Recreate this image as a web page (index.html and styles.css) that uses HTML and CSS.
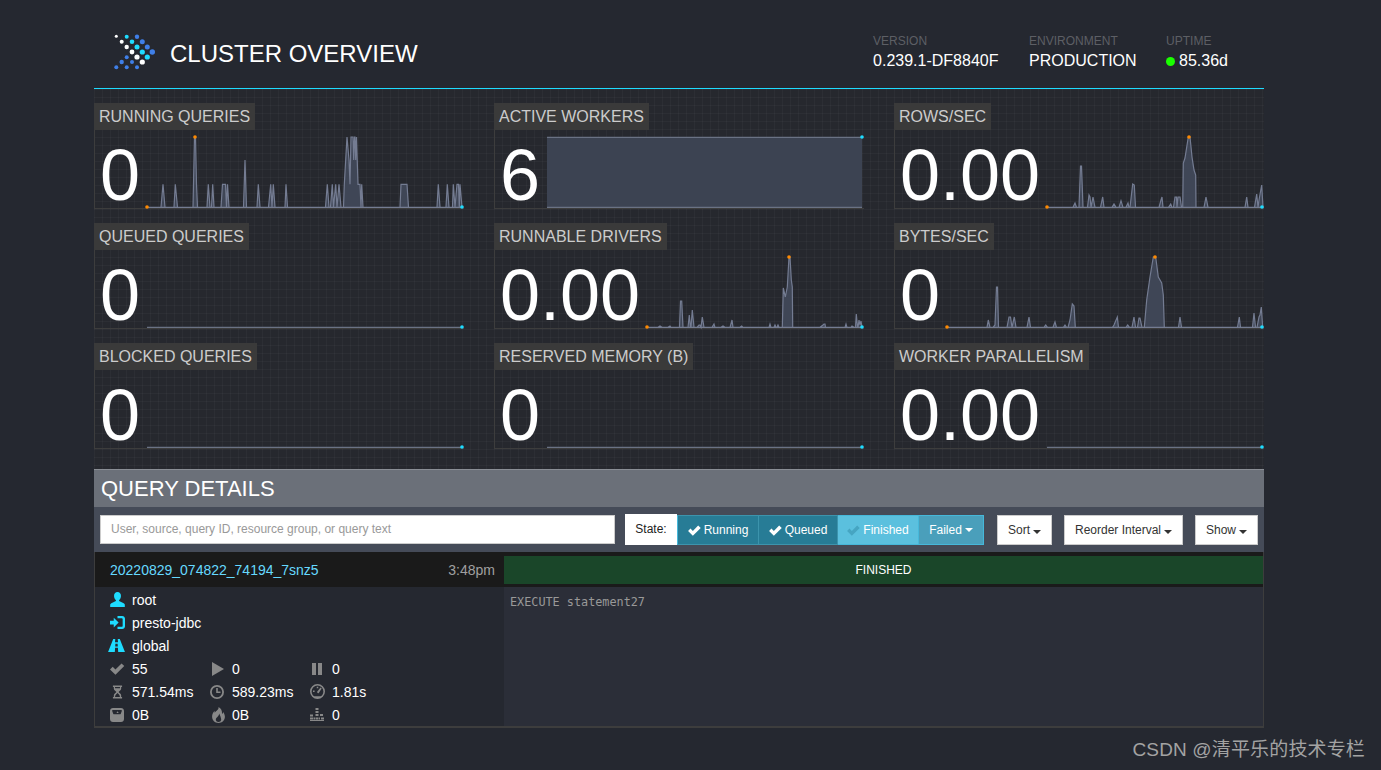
FILE: index.html
```html
<!DOCTYPE html>
<html lang="en">
<head>
<meta charset="utf-8">
<title>Cluster Overview</title>
<link rel="stylesheet" href="styles.css">
</head>
<body>
<div class="container">
  <header class="header">
    <div class="brand">
      <svg class="logo" viewBox="110 30 50 44" width="50" height="44">
        <g class="d-w"><circle cx="116.3" cy="36.3" r="1.5"/><circle cx="121.7" cy="41.7" r="2"/><circle cx="126.7" cy="47" r="2.2"/><circle cx="132" cy="52" r="2.4"/><circle cx="137" cy="57" r="2.6"/><circle cx="142.3" cy="62" r="2.6"/></g>
        <g class="d-c"><circle cx="126.7" cy="36.7" r="2"/><circle cx="132" cy="41.7" r="2.3"/><circle cx="137" cy="47" r="2.5"/><circle cx="142.3" cy="52" r="2.6"/><circle cx="147.3" cy="57" r="2.6"/></g>
        <g class="d-b"><circle cx="137" cy="36.7" r="2.2"/><circle cx="142.3" cy="41.7" r="2.5"/><circle cx="147.3" cy="47" r="2.5"/><circle cx="152.3" cy="52" r="2.7"/><circle cx="126.7" cy="57.3" r="2"/><circle cx="121.7" cy="62" r="2.2"/><circle cx="132" cy="62" r="2"/><circle cx="116.3" cy="67.3" r="2"/><circle cx="126.7" cy="67.3" r="2"/><circle cx="137" cy="67.3" r="2"/></g>
      </svg>
      <h1 class="title">CLUSTER OVERVIEW</h1>
    </div>
    <div class="meta">
      <div class="meta-item meta-version"><span class="meta-label">VERSION</span><span class="meta-value">0.239.1-DF8840F</span></div>
      <div class="meta-item meta-env"><span class="meta-label">ENVIRONMENT</span><span class="meta-value">PRODUCTION</span></div>
      <div class="meta-item"><span class="meta-label">UPTIME</span><span class="meta-value"><i class="status-dot"></i>85.36d</span></div>
    </div>
  </header>

  <section class="stats">
    <div class="stat">
      <div class="stat-label">RUNNING QUERIES</div>
      <div class="stat-body">
        <div class="stat-value">0</div>
        <svg class="spark" viewBox="145 130 320 80" width="320" height="80">
          <path class="area" d="M147 207.3H160L161 207 163 184.3 165 207.3H174L175.3 184.3 177.5 207.3H193L193.5 184.3 194.5 137H195.500L196.500 184.300 197.500 207.300H207L208.300 184.300 210 207.300H211.500L212.700 184.300 214 207.300H221L222.500 184.300H225.500L226.500 207.300 227.500 184.300 229 207.300H243.500L245 160 246.500 207.300H257L258.300 184.300 260 207.300H268.500L270.700 184.300 272 207.300 273.300 184.300 275 207.300H285L286 184.300 287.500 207.300H325.500L327.300 184.300 329 207.300H330.500L332.300 184.300 333.500 207.300 335.700 184.300 337 207.300 339 184.300 341 207.300H343.500L344.300 184.300 347 137 349 160 350 184.300 351 137H353L353.700 160 354.500 137H355L355.700 160 356.500 137 358 184.300H360L361 207.300 361.700 184.300 363 207.300H400L401 184.300H407L408.500 207.300H437L438.300 184.300 440 207.300H446L447.300 184.300 449 207.300H452.500L453.300 184.300 455 207.300 457 184.300H458.500L459.300 207.300 460 184.300 462 207.300Z"/>
          <circle class="dot-min" cx="147" cy="207" r="1.8"/><circle class="dot-min" cx="195" cy="137" r="1.8"/><circle class="dot-end" cx="462" cy="207" r="1.8"/>
        </svg>
      </div>
    </div>
    <div class="stat">
      <div class="stat-label">ACTIVE WORKERS</div>
      <div class="stat-body">
        <div class="stat-value">6</div>
        <svg class="spark" viewBox="545 130 320 80" width="320" height="80">
          <path class="block" d="M547 137.300H862V207.300H547Z"/>
          <path class="flat" d="M547 137.300H862M547 207.300H862"/>
          <circle class="dot-end" cx="862" cy="137" r="1.8"/>
        </svg>
      </div>
    </div>
    <div class="stat">
      <div class="stat-label">ROWS/SEC</div>
      <div class="stat-body">
        <div class="stat-value">0.00</div>
        <svg class="spark spark-short" viewBox="1045 130 220 80" width="220" height="80">
          <path class="area" d="M1047 207.300H1073L1075 203 1076.500 207.300H1079L1080.500 166H1081.500L1083 207.300H1087.500L1089 195 1090 197 1091 207.300 1093 197 1095 207.300H1100.500L1102.700 197 1104 207.300H1112L1114 204 1116 207.300H1119L1121 200.700 1123 207.300H1126L1128 203 1129 207.300H1130L1132.700 184 1134.300 185 1135.500 207.300H1159L1161 200 1162 197 1163 207.300H1168.500L1170.700 204 1172 207.300H1173.500L1175 197 1176.500 197 1177 207.300 1178 197H1180L1181.500 207.300H1182.700L1183.300 163 1185 158 1188.300 137H1190L1192 157 1194 170 1195.700 175 1196 207.300H1204L1206 197 1208 207.300H1245L1246.700 197 1248 207.300H1254.500L1256.700 194 1258 207.300 1259 200 1261.700 185 1263 207.300Z"/>
          <circle class="dot-min" cx="1047" cy="207" r="1.8"/><circle class="dot-min" cx="1189" cy="137" r="1.8"/><circle class="dot-end" cx="1262" cy="207" r="1.8"/>
        </svg>
      </div>
    </div>

    <div class="stat">
      <div class="stat-label">QUEUED QUERIES</div>
      <div class="stat-body">
        <div class="stat-value">0</div>
        <svg class="spark" viewBox="145 250 320 80" width="320" height="80">
          <path class="flat" d="M147 327.300H462"/><circle class="dot-end" cx="462" cy="327" r="1.8"/>
        </svg>
      </div>
    </div>
    <div class="stat">
      <div class="stat-label">RUNNABLE DRIVERS</div>
      <div class="stat-body">
        <div class="stat-value">0.00</div>
        <svg class="spark spark-mid" viewBox="645 250 220 80" width="220" height="80">
          <path class="area" d="M647 327.300H658L660 326 662 327.300H668L670 326 671 327.300H679.500L680.500 301H681.700L683 327.300H688L689.300 315 690.500 327.300H691L692.300 310 694 327.300H697L699 325 700 325 701 327.300 702.300 317 704 327.300H712L714 324 715 327.300H721L723 326 725 327.300H730L732 320 733 327.300H740L741.700 326 743 327.300H769L770 324 771 327.300H774L775 325 776 327.300H777L778 325 779 327.300H782.300L783.300 288 785.300 297 787.300 287 789 257H790L791.300 280 792.300 287 792.700 327.300H820L823 325 824 324H825L825.500 327.300H845L846 324 847 327.300H851L852 326 854 327.300H855.500L856.300 314 857.500 327.300H858L859 320 860 325 861 321 862 327.300Z"/>
          <circle class="dot-min" cx="647" cy="327" r="1.8"/><circle class="dot-min" cx="789" cy="257" r="1.8"/><circle class="dot-end" cx="862" cy="327" r="1.8"/>
        </svg>
      </div>
    </div>
    <div class="stat">
      <div class="stat-label">BYTES/SEC</div>
      <div class="stat-body">
        <div class="stat-value">0</div>
        <svg class="spark" viewBox="945 250 320 80" width="320" height="80">
          <path class="area" d="M947 327.300H987L988.300 320 990 327.300H993L995 325 996.500 287H997.500L998.500 327.300H1007L1009 317H1010.500L1012 327.300 1014.300 317 1016 327.300H1027L1029 317 1030.500 327.300H1044L1045.700 325 1047.500 327.300H1053L1055 322 1056.500 327.300H1063.500L1065 325 1066.500 327.300H1068L1070 320 1072.300 304 1074 306 1075.300 327.300H1112.500L1114 325 1117.300 317 1118.500 327.300H1126L1127.700 325 1129.500 327.300H1132L1134 317 1135.500 327.300H1137.500L1139 318H1140L1142 327.300H1144.300L1146.700 300 1150 277 1153.300 257H1155.700L1158.300 277 1161.700 283 1163.300 295 1164.300 327.300H1178.500L1180 317 1181.500 327.300H1237.500L1239.300 317 1240.500 327.300H1252.500L1254 313 1255.500 327.300H1257L1259 317 1260 315 1261.300 307 1262.700 327.300Z"/>
          <circle class="dot-min" cx="947" cy="327" r="1.8"/><circle class="dot-min" cx="1155" cy="257" r="1.8"/><circle class="dot-end" cx="1262" cy="327" r="1.8"/>
        </svg>
      </div>
    </div>

    <div class="stat">
      <div class="stat-label">BLOCKED QUERIES</div>
      <div class="stat-body">
        <div class="stat-value">0</div>
        <svg class="spark" viewBox="145 370 320 80" width="320" height="80">
          <path class="flat" d="M147 447.300H462"/><circle class="dot-end" cx="462" cy="447" r="1.8"/>
        </svg>
      </div>
    </div>
    <div class="stat">
      <div class="stat-label">RESERVED MEMORY (B)</div>
      <div class="stat-body">
        <div class="stat-value">0</div>
        <svg class="spark" viewBox="545 370 320 80" width="320" height="80">
          <path class="flat" d="M547 447.300H862"/><circle class="dot-end" cx="862" cy="447" r="1.8"/>
        </svg>
      </div>
    </div>
    <div class="stat">
      <div class="stat-label">WORKER PARALLELISM</div>
      <div class="stat-body">
        <div class="stat-value">0.00</div>
        <svg class="spark spark-short" viewBox="1045 370 220 80" width="220" height="80">
          <path class="flat" d="M1047 447.300H1262"/><circle class="dot-end" cx="1262" cy="447" r="1.8"/>
        </svg>
      </div>
    </div>
  </section>

  <section class="details">
    <h2 class="details-title">QUERY DETAILS</h2>
    <div class="toolbar">
      <input class="search" type="text" placeholder="User, source, query ID, resource group, or query text">
      <div class="state-group">
        <span class="state-label">State:</span>
        <button class="seg seg-on seg-running"><svg class="tick" viewBox="0 0 14 12" width="13" height="11"><path d="M0 6.500 2.600 3.900 5.200 6.500 11 .6 13.800 3.200 5.200 11.800Z"/></svg>Running</button>
        <button class="seg seg-on seg-queued"><svg class="tick" viewBox="0 0 14 12" width="13" height="11"><path d="M0 6.500 2.600 3.900 5.200 6.500 11 .6 13.800 3.200 5.200 11.800Z"/></svg>Queued</button>
        <button class="seg seg-off"><svg class="tick tick-dim" viewBox="0 0 14 12" width="13" height="11"><path d="M0 6.500 2.600 3.900 5.200 6.500 11 .6 13.800 3.200 5.200 11.800Z"/></svg>Finished</button>
        <button class="seg seg-failed">Failed<i class="caret"></i></button>
      </div>
      <button class="drop drop-sort">Sort<i class="caret caret-dark"></i></button>
      <button class="drop drop-reorder">Reorder Interval<i class="caret caret-dark"></i></button>
      <button class="drop drop-show">Show<i class="caret caret-dark"></i></button>
    </div>

    <div class="query">
      <div class="query-left">
        <div class="query-head"><a class="query-id">20220829_074822_74194_7snz5</a><span class="query-time">3:48pm</span></div>
        <div class="info">
          <div class="info-row"><span class="ico"><svg viewBox="0 0 16 16" width="15" height="15"><path class="ic-c" d="M8 0C5.600 0 4.300 1.800 4.300 4.200c0 2 1 3.600 2 4.300v1.200L1.400 12c-.8.4-1.200 1-1.200 1.700V16h15.600v-2.300c0-.7-.4-1.300-1.200-1.700L9.700 9.700V8.500c1-.7 2-2.300 2-4.300C11.700 1.800 10.400 0 8 0Z"/></svg></span>root</div>
          <div class="info-row"><span class="ico"><svg viewBox="0 0 16 16" width="15" height="15"><path class="ic-c" d="M0 6H4V2.800L9.200 8 4 13.200V10H0ZM8 1H13C14.700 1 16 2.300 16 4V12C16 13.700 14.700 15 13 15H8V12.500H12.500C13.200 12.500 13.500 12.200 13.500 11.500V4.500C13.500 3.800 13.200 3.500 12.500 3.500H8Z"/></svg></span>presto-jdbc</div>
          <div class="info-row"><span class="ico ico-road"><svg viewBox="0 0 18 16" width="17" height="15"><path class="ic-c" d="M5.500 1H7.700L7.400 4.500H10.600L10.300 1H12.500L18 15H10.800L10.500 10.500H7.500L7.200 15H0ZM7.800 6.200 7.600 9H10.400L10.200 6.200Z"/></svg></span>global</div>
          <div class="stats-grid">
            <div class="cell"><span class="ico"><svg viewBox="0 0 16 12" width="15" height="12"><path class="ic-g" d="M0 6.500 2.900 3.700 5.800 6.600 12.300 0 15.200 2.900 5.800 12Z"/></svg></span>55</div>
            <div class="cell"><span class="ico"><svg class="ic-shift" viewBox="0 0 12 14" width="12" height="14"><path class="ic-g" d="M0 0 12 7 0 14Z"/></svg></span>0</div>
            <div class="cell"><span class="ico"><svg class="ic-shift" viewBox="0 0 10 12" width="10" height="12"><path class="ic-g" d="M0 0H4V12H0ZM6 0H10V12H6Z"/></svg></span>0</div>

            <div class="cell"><span class="ico"><svg class="ic-shift" viewBox="0 0 12 14" width="11" height="14"><path class="ic-g" d="M1 0H11V1.500H10V3.500C10 5 8 6 7.200 7 8 8 10 9 10 10.500V12.500H11V14H1V12.500H2V10.500C2 9 4 8 4.800 7 4 6 2 5 2 3.500V1.500H1ZM3.300 1.500V3H8.700V1.500ZM6 8.200C5 9.200 3.500 10 3.300 12.500H8.700C8.500 10 7 9.200 6 8.200Z"/></svg></span>571.54ms</div>
            <div class="cell"><span class="ico"><svg viewBox="0 0 14 14" width="14" height="14"><path class="ic-g" fill-rule="evenodd" d="M7 0A7 7 0 1 1 7 14 7 7 0 0 1 7 0ZM7 1.800A5.200 5.200 0 1 0 7 12.200 5.200 5.200 0 0 0 7 1.800ZM6.200 3H7.800V6.500H10.500V8H6.200Z"/></svg></span>589.23ms</div>
            <div class="cell"><span class="ico"><svg viewBox="0 0 14 14" width="15" height="15"><path class="ic-g" fill-rule="evenodd" d="M7 0A7 7 0 1 1 7 14 7 7 0 0 1 7 0ZM7 1.500A5.500 5.500 0 0 0 1.500 7C1.500 9.300 3 11 4 11.500H10C11 11 12.500 9.300 12.500 7A5.500 5.500 0 0 0 7 1.500ZM6.300 2.500H7.700V4H6.300ZM2.800 6H4.300V7.500H2.800ZM9.800 3.300 10.900 4.300 8.200 8.300C7.500 9 6.200 8 6.800 7.100Z"/></svg></span>1.81s</div>

            <div class="cell"><span class="ico"><svg viewBox="0 0 14 14" width="14" height="14"><path class="ic-g" fill-rule="evenodd" d="M3 0H11C12.700 0 14 1.300 14 3V11C14 12.700 12.700 14 11 14H3C1.300 14 0 12.700 0 11V3C0 1.300 1.300 0 3 0ZM3 2C2.400 2 2 2.500 2.200 3L3.200 5.800C3.400 6.200 3.700 6.300 4 6.300H10C10.300 6.300 10.600 6.200 10.800 5.800L11.800 3C12 2.500 11.600 2 11 2ZM7.500 3.200 8.700 5H6.500Z"/></svg></span>0B</div>
            <div class="cell"><span class="ico"><svg class="ic-shift" viewBox="0 0 12 15" width="13" height="16"><path class="ic-g" fill-rule="evenodd" d="M6 0C6.500 2.500 3.800 3.300 2.500 5.500 2.200 4.800 2.300 4 2.500 3.500 .8 5 0 7 0 9.200 0 12.500 2.700 15 6 15S12 12.500 12 9.200C12 7.500 11.300 5.800 10.300 4.700 10.300 5.500 10 6.200 9.300 6.500 9.500 3.700 8.500 1.200 6 0ZM6.500 6C7 8 4 9.500 3.500 11.500 3.200 13 4.500 14 6 14 7.500 14 8.800 13 8.500 11.500 8.200 9.500 7.500 7.500 6.500 6Z"/></svg></span>0B</div>
            <div class="cell"><span class="ico"><svg viewBox="0 0 14 13" width="14" height="13"><path class="ic-g" d="M5.500 0H8.500V2H5.500ZM5.500 3H8.500V5H5.500ZM0 6.500H3V8.500H0ZM5.500 6H8.500V8H5.500ZM10 6H13V8H10ZM0 9.500H3V11.500H0ZM3.500 9.500H5V11.500H3.500ZM5.500 9.500H8.500V11.500H5.500ZM9 9.500H10V11.500H9ZM11 9.500H14V11.500H11ZM0 12H14V13H0Z"/></svg></span>0</div>
          </div>
        </div>
      </div>
      <div class="query-right">
        <div class="state-wrap"><div class="state-bar">FINISHED</div></div>
        <pre class="sql">EXECUTE statement27</pre>
      </div>
    </div>
  </section>
</div>
<div class="watermark">CSDN @清平乐的技术专栏</div>
</body>
</html>
```
FILE: styles.css
```css
* { box-sizing: border-box; }
html, body { height: 100%; }
body {
  margin: 0;
  background: #252830;
  color: #fff;
  font-family: "Liberation Sans", Arial, sans-serif;
  font-size: 14px;
  overflow: hidden;
}
.container { width: 1170px; margin-left: 94px; }

.header {
  display: flex;
  justify-content: space-between;
  height: 89px;
  border-bottom: 1px solid #1edcff;
}
.brand { display: flex; align-items: flex-start; padding: 30px 0 0 16px; }
.logo { display: block; }
.d-w { fill: #fff; }
.d-c { fill: #1edcff; }
.d-b { fill: #3f7fe8; }
.title { margin: 10px 0 0 10px; font-size: 24px; font-weight: 400; line-height: 28px; }

.meta { display: flex; padding: 34px 36px 0 0; }
.meta-item { display: flex; flex-direction: column; }
.meta-version { width: 156px; }
.meta-env { width: 137px; }
.meta-label { font-size: 12px; line-height: 15px; color: #5d5f65; }
.meta-value { font-size: 16px; line-height: 24px; white-space: nowrap; }
.status-dot {
  display: inline-block;
  width: 9px;
  height: 9px;
  margin-right: 4px;
  border-radius: 50%;
  background: #1aff00;
}

.stats {
  display: grid;
  grid-template-columns: repeat(3, 370px);
  grid-auto-rows: 120px;
  column-gap: 30px;
  padding-top: 14px;
  height: 380px;
  background-color: #26282e;
  background-image:
    linear-gradient(to right, rgba(255,255,255,.028) 1px, transparent 1px),
    linear-gradient(to bottom, rgba(255,255,255,.028) 1px, transparent 1px);
  background-size: 8px 8px;
}
.stat { display: flex; flex-direction: column; height: 120px; }
.stat-label {
  align-self: flex-start;
  height: 27px;
  padding: 0 5px;
  background: #3a3a3a;
  color: #ccc;
  font-size: 16px;
  line-height: 27px;
  white-space: nowrap;
}
.stat-body {
  position: relative;
  display: flex;
  height: 79px;
  border-left: 1px solid #3d3d3d;
  border-bottom: 1px solid #3d3d3d;
}
.stat-value {
  flex: none;
  width: 50px;
  padding-left: 5px;
  font-size: 72px;
  line-height: 90px;
  height: 79px;
  white-space: nowrap;
}
.spark { flex: none; display: block; overflow: visible; margin-top: 0; }
.spark-short, .spark-mid { margin-left: 100px; }
.area { fill: #3f4656; stroke: #747c92; stroke-width: 1.2; }
.block { fill: #3c4352; }
.flat { fill: none; stroke: #6a7284; stroke-width: 1.2; }
.dot-min { fill: #ff8a00; }
.dot-end { fill: #1edcff; }

.details-title {
  margin: 0;
  height: 38px;
  padding-left: 7px;
  background: #6b7079;
  border-top: 1px solid #8a8e95;
  font-size: 22px;
  font-weight: 400;
  line-height: 38px;
}
.toolbar {
  display: flex;
  align-items: center;
  height: 45px;
  padding-left: 6px;
  background: #454b58;
}
.search {
  width: 515px;
  height: 29px;
  margin: -1px 10px 0 0;
  padding: 0 10px;
  border: 1px solid #ccc;
  background: #fff;
  font: 12px "Liberation Sans", Arial, sans-serif;
}
.search::placeholder { color: #999; }
.state-group { display: flex; height: 31px; margin-right: 13px; }
.state-label {
  width: 52px;
  background: #fff;
  color: #222;
  font-size: 12px;
  line-height: 30px;
  text-align: center;
}
.seg {
  display: flex;
  align-items: center;
  justify-content: center;
  height: 30px;
  margin: 1px 0 0;
  padding: 0;
  border: 1px solid #46b8da;
  border-left-width: 0;
  color: #fff;
  font: 12px "Liberation Sans", Arial, sans-serif;
}
.seg-on { background: #277c96; border-color: #3c94ad; }
.seg-running { width: 82px; border-left-width: 1px; border-left-color: #46b8da; }
.seg-queued { width: 79px; }
.seg-off { width: 81px; background: #5bc0de; }
.seg-failed { width: 65px; background: #4a9fbb; border-left-color: #46b8da; }
.tick { margin-right: 3px; fill: #fff; }
.tick-dim { fill: #46a5c2; }
.caret {
  display: inline-block;
  margin-left: 3px;
  border-top: 4px solid #fff;
  border-left: 4px solid transparent;
  border-right: 4px solid transparent;
}
.caret-dark { border-top-color: #333; }
.drop {
  height: 30px;
  padding: 0;
  background: #fff;
  border: 1px solid #ccc;
  color: #333;
  font: 12px "Liberation Sans", Arial, sans-serif;
}
.drop-sort { width: 55px; margin-right: 12px; }
.drop-reorder { width: 119px; margin-right: 12px; }
.drop-show { width: 63px; }

.query {
  display: flex;
  height: 176px;
  border-left: 1px solid #3d3d3d;
  border-right: 1px solid #3d3d3d;
  border-bottom: 2px solid #3d3d3d;
}
.query-left { width: 409px; flex: none; }
.query-head {
  display: flex;
  justify-content: space-between;
  height: 35px;
  padding: 0 9px 0 15px;
  background: #1a1a1a;
  line-height: 36px;
}
.query-id { color: #66d9ff; }
.query-time { color: #a0a0a0; }
.info { padding: 1px 0 0 15px; }
.info-row { display: flex; align-items: center; height: 23px; }
.ico { display: flex; align-items: center; width: 22px; flex: none; }
.ico svg { display: block; }
.ico-road svg { margin-left: -2px; }
.ic-shift { margin-left: 2px; }
.ic-c { fill: #1edcff; }
.ic-g { fill: #888; }
.stats-grid { display: grid; grid-template-columns: 100px 100px auto; grid-auto-rows: 23px; }
.cell { display: flex; align-items: center; }

.query-right { flex: 1; background: #2b2e38; }
.state-wrap { height: 35px; padding: 4px 0 3px; background: #1a1a1a; }
.state-bar {
  height: 28px;
  background: #1a4629;
  font-size: 12px;
  line-height: 28px;
  text-align: center;
}
.sql {
  margin: 0;
  padding: 8px 6px;
  color: #999;
  font: 11.8px/14px "DejaVu Sans Mono", "Liberation Mono", monospace;
}

.watermark {
  position: absolute;
  right: 16px;
  bottom: 9px;
  color: #a3a3a3;
  letter-spacing: .15px;
  font: 19px "Liberation Sans", "Noto Sans CJK SC", sans-serif;
}
```
